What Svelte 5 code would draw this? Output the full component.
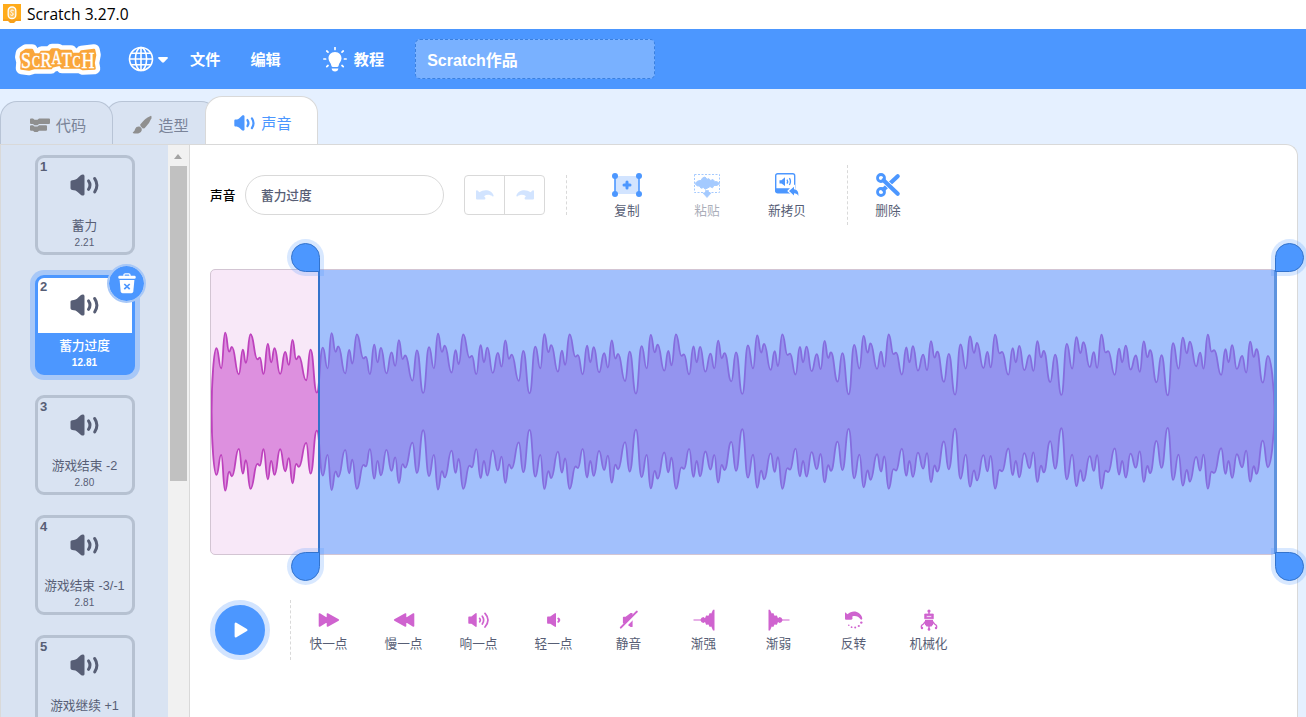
<script>
  let activeTab = $state('sounds')
  let selected = $state(1)
  let soundName = $state('蓄力过度')

  const tabs = [
    { id: 'code', label: '代码' },
    { id: 'costumes', label: '造型' },
    { id: 'sounds', label: '声音' }
  ]

  const sounds = [
    { name: '蓄力', length: '2.21' },
    { name: '蓄力过度', length: '12.81' },
    { name: '游戏结束 -2', length: '2.80' },
    { name: '游戏结束 -3/-1', length: '2.81' },
    { name: '游戏继续 +1', length: '' }
  ]

  const effects = [
    { id: 'faster', label: '快一点' },
    { id: 'slower', label: '慢一点' },
    { id: 'louder', label: '响一点' },
    { id: 'softer', label: '轻一点' },
    { id: 'mute', label: '静音' },
    { id: 'fadein', label: '渐强' },
    { id: 'fadeout', label: '渐弱' },
    { id: 'reverse', label: '反转' },
    { id: 'robot', label: '机械化' }
  ]

  // turning points of one loop, [offset, level], at the start and at the end of the sound
  const head = [[18,190],[32,130],[44,237],[56,180],[64,194],[85,112],[97,186],[106,146],[120,232],[141,157],[148,162],[159,113],[172,203],[182,148],[192,190],[209,113],[224,179],[235,140],[246,215],[257,157],[265,166],[287,94],[300,186],[319,57]]
  const tail = [[16,205],[32,129],[45,222],[57,175],[66,210],[85,136],[97,177],[107,129],[120,231],[131,180],[139,184],[160,110],[173,187],[182,148],[193,199],[207,128],[223,167],[235,117],[247,210],[258,164],[266,187],[285,87],[300,167],[319,48]]
  const loops = 10
  const mid = 141.6

  function buildWave() {
    let pts = []
    for (let i = 0; i < loops; i++) {
      const t = i / (loops - 1)
      head.forEach(([x, v], k) => {
        const px = -0.5 + i * 106.37 + (x + (tail[k][0] - x) * t) / 3
        pts.push([px, (v + (tail[k][1] - v) * t) / 3])
      })
    }
    pts.pop()
    const end = 1063.4
    const side = (list, sign) => {
      let d = ''
      for (let i = 1; i < list.length; i++) {
        const [x0, v0] = list[i - 1]
        const [x1, v1] = list[i]
        const c = (x1 - x0) * 0.5
        d += `C${(x0 + c).toFixed(2)} ${(mid - sign * v0).toFixed(2)} ${(x1 - c).toFixed(2)} ${(mid - sign * v1).toFixed(2)} ${x1.toFixed(2)} ${(mid - sign * v1).toFixed(2)}`
      }
      return d
    }
    const [fx, fv] = pts[0]
    const [lx, lv] = pts[pts.length - 1]
    return `M.6 ${mid}C.6 ${mid - 30} 3 ${mid - fv} ${fx} ${mid - fv}` + side(pts, 1) +
      `C${lx + 3} ${mid - lv} ${end} ${mid - 25} ${end} ${mid}C${end} ${mid + 25} ${lx + 3} ${mid + lv} ${lx} ${mid + lv}` +
      side([...pts].reverse(), -1) + `C3 ${mid + fv} .6 ${mid + 30} .6 ${mid}Z`
  }

  const wave = buildWave()
  const logoShape = 'M7.5 11L12 8H18L20 12.5H26L27.5 10H36L38 7.5H44L46.5 9H57L58 12L66 12L67.5 9.5L80 8L81 13L79.5 21L80.5 26.5L69 27L66 25.5H48L46 22.5L38 24.5L37 26H20L15 27.5L7.5 26.5L8 20L6.8 15Z'
</script>

{#snippet speaker()}
  <svg class="speaker" viewBox="0 0 28 22" fill="currentColor">
    <path d="M1.8 6.3 C4 6.3 6 5.5 8 3.3 L10.5 1 C12 -.1 14 .4 14 2 V20 C14 21.6 12 22 10.5 21 L8 18.7 C6 16.6 4 15.9 1.8 15.9 C.6 15.9 0 15.2 0 14.1 V8.1 C0 7 .6 6.3 1.8 6.3Z" />
    <path d="M18 6.9 Q21 11.1 18 15.3" fill="none" stroke="currentColor" stroke-width="3" stroke-linecap="round" />
    <path d="M24.2 4.6 Q28.6 11.1 24.2 18" fill="none" stroke="currentColor" stroke-width="3" stroke-linecap="round" />
  </svg>
{/snippet}

<div class="app">
  <div class="titlebar">
    <svg width="18" height="19" viewBox="0 0 18 19">
      <path d="M0 0H18V17L13 17L11 19H7L5 17H0Z" fill="#f7a01b" />
      <path d="M0 0H18V15H0Z" fill="#ffab1a" />
      <rect x="5.2" y="3" width="7.6" height="11.5" rx="3.6" fill="#ffc35c" stroke="#fff" stroke-width="1.3" />
      <path d="M10.6 6.5Q8 5 7.7 7.2Q8 8.3 9.4 8.9Q10.6 9.8 10 11Q8.7 12 7.4 10.7" fill="none" stroke="#fff" />
    </svg>
    <span>Scratch 3.27.0</span>
  </div>

  <header class="menubar">
    <svg class="logo" width="88" height="34" viewBox="0 0 88 34" stroke-linejoin="round">
      <path d={logoShape} fill="#fff" stroke="#fff" stroke-width="11.5" />
      <path d={logoShape} fill="#faa63a" stroke="#faa63a" stroke-width="2.6" />
      <text x="7" y="26" font-size="24" textLength="10" lengthAdjust="spacingAndGlyphs">S</text>
      <text x="18" y="24.5" font-size="17" textLength="8" lengthAdjust="spacingAndGlyphs">C</text>
      <text x="26.5" y="25" font-size="21" textLength="11" lengthAdjust="spacingAndGlyphs">R</text>
      <text x="37.5" y="21.5" font-size="19" textLength="10" lengthAdjust="spacingAndGlyphs">A</text>
      <text x="47.7" y="24.5" font-size="22" textLength="10" lengthAdjust="spacingAndGlyphs">T</text>
      <text x="58.5" y="24.5" font-size="17" textLength="8" lengthAdjust="spacingAndGlyphs">C</text>
      <text x="67.5" y="26" font-size="24" textLength="13" lengthAdjust="spacingAndGlyphs">H</text>
    </svg>
    <button class="lang" aria-label="语言">
      <svg width="26" height="26" viewBox="0 0 26 26" fill="none" stroke="#fff" stroke-width="1.6">
        <circle cx="13" cy="13" r="11.5" />
        <ellipse cx="13" cy="13" rx="5.6" ry="11.5" />
        <path d="M13 1.5V24.5M1.5 13H24.5M3.2 7.2H22.8M3.2 18.8H22.8" />
      </svg>
      <svg class="caret" width="10" height="6" viewBox="0 0 10 6"><path d="M1 0H9Q10.4.3 9.6 1.4L6 5.3Q5 6.2 4 5.3L.4 1.4Q-.4.3 1 0Z" fill="#fff" /></svg>
    </button>
    <button class="menu file">文件</button>
    <button class="menu edit">编辑</button>
    <button class="menu tutorials">
      <svg width="24" height="25" viewBox="0 0 24 25">
        <path d="M12 5C7.8 5 5.4 8 5.5 11.5C5.6 14.5 8 16 8.4 18.7Q8.6 20 10 20H14Q15.4 20 15.6 18.7C16 16 18.4 14.5 18.5 11.5C18.6 8 16.2 5 12 5Z" fill="#fff" />
        <path d="M8.6 21.4H15.4Q15 24.4 12 24.4T8.6 21.4Z" fill="#fff" />
        <path d="M12 .6V2.4M3.8 4L5 5.1M20.2 4L19 5.1M.8 12H2.6M21.4 12H23.2M3.8 19.6L5 18.5M20.2 19.6L19 18.5" stroke="#fff" stroke-width="1.7" stroke-linecap="round" />
      </svg>
      <span>教程</span>
    </button>
    <div class="project-title">Scratch作品</div>
  </header>

  <main>
    <nav class="tabs">
      {#each tabs as tab}
        <button class="tab {tab.id}" class:active={activeTab === tab.id} onclick={() => activeTab = tab.id}>
          {#if tab.id === 'code'}
            <svg width="20" height="14" viewBox="0 0 20 14" fill="#8f8f8f">
              <path d="M1 .5H3L4.5 1.8H7.5L9 .5H19Q20 .5 20 1.5V5Q20 6 19 6H9L7.5 7.3H4.5L3 6H1Q0 6 0 5V1.5Q0 .5 1 .5Z" />
              <path d="M1 7.3H3L4.5 8.6H7.5L9 7.3H16Q17 7.3 17 8.3V11.8Q17 12.8 16 12.8H9L7.5 14H4.5L3 12.8H1Q0 12.8 0 11.8V8.3Q0 7.3 1 7.3Z" />
            </svg>
          {:else if tab.id === 'costumes'}
            <svg width="20" height="20" viewBox="0 0 20 20" fill="#8f8f8f">
              <path d="M19 .7Q20 1.2 19.4 3.3Q17.6 8.6 12.6 13.2L10.8 13.4L8.3 10.9L8.5 9.3Q13 3 19 .7Z" />
              <path d="M7.4 11.6Q10.2 12.8 9.7 15.4Q8 19.6 1.2 18.2Q.2 17.6 1.3 17Q2.8 16.2 3.1 14Q4.3 11.2 7.4 11.6Z" />
            </svg>
          {:else}
            {@render speaker()}
          {/if}
          <span>{tab.label}</span>
        </button>
      {/each}
    </nav>

    <div class="editor">
      <aside class="list">
        {#each sounds as sound, i}
          <div class="item" class:selected={selected === i}>
            <span class="number">{i + 1}</span>
            <button class="thumb" aria-label={sound.name} onclick={() => selected = i}>{@render speaker()}</button>
            <div class="info">
              <div class="name">{sound.name}</div>
              <div class="length">{sound.length}</div>
            </div>
            {#if selected === i}
              <button class="trash" aria-label="删除">
                <svg width="18" height="21" viewBox="0 0 18 21">
                  <path d="M6 3V2Q6 .8 7.2 .8H10.8Q12 .8 12 2V3" fill="none" stroke="#fff" stroke-width="1.3" />
                  <rect x=".3" y="2.8" width="17.4" height="3" rx="1.2" fill="#fff" />
                  <path d="M1.6 7H16.4L15.3 18.5Q15 20.2 13.4 20.2H4.6Q3 20.2 2.7 18.5Z" fill="#fff" />
                  <path d="M6.3 11L11.7 16.2M11.7 11L6.3 16.2" stroke="#4c97ff" stroke-width="1.7" />
                </svg>
              </button>
            {/if}
          </div>
        {/each}
      </aside>
      <div class="scrollbar">
        <div class="arrow"></div>
        <div class="grip"></div>
      </div>

      <section class="panel">
        <div class="toolbar">
          <span class="label">声音</span>
          <input bind:value={soundName} aria-label="声音" />
          <div class="history">
            <button aria-label="撤销">
              <svg width="18" height="10" viewBox="0 0 18 10"><path d="M0 1.2Q.2-.2 1.6.6L3.4 2.3C8-1.2 15.8-.2 17.6 5.5Q17.8 6.8 16.6 6.4C13.6 4.3 10.5 4.4 8.1 6.2L9.3 7.8Q9.7 9.3 8.4 9.5H1Q0 9.4 0 8.5Z" fill="#d2e4ff" /></svg>
            </button>
            <button aria-label="重做">
              <svg class="flip" width="18" height="10" viewBox="0 0 18 10"><path d="M0 1.2Q.2-.2 1.6.6L3.4 2.3C8-1.2 15.8-.2 17.6 5.5Q17.8 6.8 16.6 6.4C13.6 4.3 10.5 4.4 8.1 6.2L9.3 7.8Q9.7 9.3 8.4 9.5H1Q0 9.4 0 8.5Z" fill="#d2e4ff" /></svg>
            </button>
          </div>
          <div class="rule short"></div>
          <div class="tools">
            <button class="tool">
              <svg width="30" height="26" viewBox="0 0 30 26">
                <rect x="3" y="4" width="24" height="18" fill="#d2e4ff" />
                <path d="M3 4V22M27 4V22" stroke="#4c97ff" stroke-width="1.6" />
                <g fill="#4c97ff"><circle cx="3" cy="4" r="3" /><circle cx="27" cy="4" r="3" /><circle cx="3" cy="22" r="3" /><circle cx="27" cy="22" r="3" /></g>
                <path d="M15 10V16M12 13H18" stroke="#4c97ff" stroke-width="3" stroke-linecap="round" />
              </svg>
              复制
            </button>
            <button class="tool disabled">
              <svg width="28" height="26" viewBox="0 0 28 26">
                <path d="M1.5 2.5H26.5V20.5H1.5Z" fill="none" stroke="#4c97ff" stroke-dasharray="2 1.5" />
                <path d="M2 11.5L4 9.5L6 8.7L8 8.5L9.5 6L12 5L14 7.3L16 6.7L17.5 8.5L20 7.5L22 9.7L24 9.7L26.5 11.5L24 13.4L21 13.4L19.5 15.8L17 14.5L15 15.8L12 17.2L10.5 15.5L8 16.2L6.5 14L4 13.8Z" fill="#4c97ff" stroke="#4c97ff" stroke-linejoin="round" />
                <path d="M12.5 18.5H15.5V21H18L14 25.5L10 21H12.5Z" fill="#4c97ff" stroke="#4c97ff" stroke-linejoin="round" stroke-width=".7" />
              </svg>
              粘贴
            </button>
            <button class="tool">
              <svg width="26" height="26" viewBox="0 0 26 26">
                <rect x="1.7" y="1.7" width="19" height="19.2" rx="2" fill="#fff" stroke="#4c97ff" stroke-width="1.4" />
                <path d="M1.7 16.2H16L14 18.5L17 21H3.5Q1.7 21 1.7 19Z" fill="#4c97ff" />
                <path d="M5.5 8.2H7.5L11 5.2V14L7.5 11.5H5.5Z" fill="#4c97ff" />
                <path d="M13 7.7Q14.3 9.6 13 11.6M15.4 6.2Q17.5 9.6 15.4 13" stroke="#4c97ff" stroke-width="1.3" fill="none" />
                <path d="M20 14.8V17.2Q25 17.6 24.4 24Q23.2 21.2 20 21.2V23.5L15 19Z" fill="#4c97ff" stroke="#fff" stroke-width="2.4" paint-order="stroke" />
              </svg>
              新拷贝
            </button>
          </div>
          <div class="rule tall"></div>
          <button class="tool">
            <svg width="26" height="26" viewBox="0 0 26 26" fill="none" stroke="#4c97ff">
              <circle cx="6" cy="6" r="3.5" stroke-width="2.8" />
              <circle cx="6" cy="20" r="3.5" stroke-width="2.8" />
              <path d="M8.5 17.5L22.7 4.2" stroke-width="4.2" stroke-linecap="round" />
              <path d="M10.5 10L22.7 21.8" stroke="#fff" stroke-width="5.8" />
              <path d="M8.5 8.3L22.7 21.8" stroke-width="4.2" stroke-linecap="round" />
            </svg>
            删除
          </button>
        </div>

        <div class="waveform">
          <svg class="wave" width="1065" height="284" viewBox="0 0 1065 284">
            <path d={wave} fill="#dd90df" stroke="#bd42bd" stroke-width="1.8" stroke-linejoin="round" />
          </svg>
          <div class="selection">
            <i class="handle top left"></i>
            <i class="handle bottom left"></i>
            <i class="handle top right"></i>
            <i class="handle bottom right"></i>
          </div>
        </div>

        <div class="effects">
          <button class="play" aria-label="播放">
            <svg width="14" height="16" viewBox="0 0 14 16"><path d="M1.8 1.8V14.2L12.3 8Z" fill="#fff" stroke="#fff" stroke-width="2.4" stroke-linejoin="round" /></svg>
          </button>
          <div class="rule"></div>
          {#each effects as effect}
            <button class="effect">
              <svg width="22" height="22" viewBox="0 0 22 22" fill="#cf63cf" stroke="#cf63cf" stroke-width="0">
                {#if effect.id === 'faster' || effect.id === 'slower'}
                  <path class:flip={effect.id === 'slower'} d="M1.5 5V17L9.5 12V17L20.3 11L9.5 5V10Z" stroke-width="1.6" stroke-linejoin="round" />
                {:else if effect.id === 'louder'}
                  <path d="M1 8.3H3.5L8 4.8V17.2L3.5 14H1Z" stroke-width="1.4" stroke-linejoin="round" />
                  <path d="M11.7 9.5Q13 11 11.7 12.8M14.3 7.2Q17 11 14.3 15M17 4.4Q23 11 17 18" fill="none" stroke-width="1.7" stroke-linecap="round" />
                {:else if effect.id === 'softer'}
                  <path d="M4.8 8.3H7.3L12.3 4.8V17.2L7.3 14H4.8Z" stroke-width="1.4" stroke-linejoin="round" />
                  <path d="M15.3 9.5Q17.3 11 15.3 12.8" stroke-width="2" stroke-linecap="round" />
                {:else if effect.id === 'mute'}
                  <path d="M5.5 8.3H8L13 4.6H14V17.4H13L8 14H5.5Z" stroke-width="1.2" stroke-linejoin="round" />
                  <path d="M4 20L20 4" stroke="#fff" stroke-width="3" />
                  <path d="M2.8 18.6L18.8 2.6" stroke-width="2" stroke-linecap="round" />
                {:else if effect.id === 'fadein' || effect.id === 'fadeout'}
                  <path class:flip={effect.id === 'fadeout'} d="M.5 10.5H7.5L8.6 8.7L10.5 8L12 9.2L13.1 6.4L15.5 6.7L16.7 4L18.3 4.6L20 .8H21.5V21.5H20L18.3 17.5L16.7 18L15.5 15.5L13.1 15.8L12 13L10.5 14L8.6 13.3L7.5 11.5H.5Z" />
                {:else if effect.id === 'reverse'}
                  <path d="M2 3.2L4.6 5.2C9.5 .5 17.5 2.2 19.3 9.2Q19.3 11 17.8 10.6C15.5 7.3 12.7 6.6 9.3 7.4L9.5 9.8Q9 10.7 8 10.7H3Q2 10.7 2 9.7Z" />
                  <g><circle cx="18.3" cy="13.6" r="1.2" /><circle cx="15.8" cy="17" r="1.1" /><circle cx="12.2" cy="18.5" r="1" /><circle cx="8.6" cy="18.2" r=".9" /><circle cx="5.8" cy="16.3" r=".8" /></g>
                {:else}
                  <circle cx="11" cy="2" r="1.6" />
                  <path d="M11 3V6M4 19.5Q2 16.8 5.5 15L7.5 12.5M18 19.5Q20 16.8 16.5 15L14.5 12.5M11 17V20.7" fill="none" stroke-width="1.4" />
                  <path d="M6.7 5H15.3V9.8H6.7ZM8.3 6.7V8.3H13.7V6.7Z" fill-rule="evenodd" stroke-width=".8" stroke-linejoin="round" />
                  <path d="M7 11H15V15.5L13.5 17.5H8.5L7 15.5Z" />
                  <circle cx="4" cy="19" r="1.2" /><circle cx="18" cy="19" r="1.2" /><circle cx="11" cy="20.4" r="1.3" />
                {/if}
              </svg>
              {effect.label}
            </button>
          {/each}
        </div>
      </section>
    </div>
  </main>
</div>

<style>
:global(body) {
  margin: 0;
  overflow: hidden;
}

* {
  box-sizing: border-box;
}

.app {
  width: 1306px;
  height: 717px;
  overflow: hidden;
  display: flex;
  flex-direction: column;
  background: #e5f0ff;
  color: #575e75;
  font-family: "Liberation Sans", "Noto Sans CJK SC", sans-serif;
  font-size: 12.7px;
}

svg {
  display: block;
  flex: none;
}

.flip {
  transform: scaleX(-1);
  transform-origin: center;
}

button {
  padding: 0;
  border: 0;
  background: none;
  color: inherit;
  font: inherit;
  cursor: pointer;
}

.titlebar {
  flex: none;
  height: 29px;
  display: flex;
  align-items: center;
  gap: 6px;
  padding: 0 0 2px 3px;
  background: #fff;
  color: #000;
  font-family: "Open Sans", sans-serif;
  font-size: 15.6px;
}

.menubar {
  flex: none;
  height: 60px;
  display: flex;
  align-items: center;
  padding-left: 14px;
  background: #4c97ff;
  color: #fff;
  font-weight: 700;
  font-size: 15.2px;
}

.logo text {
  font-family: "Liberation Serif", serif;
  font-weight: 400;
  fill: #fff;
  stroke: #fff;
  stroke-width: 0.5px;
}

.lang {
  display: flex;
  align-items: center;
  gap: 4px;
  margin-left: 26px;
}

.caret {
  margin-top: 2px;
}

.menu {
  padding-bottom: 2px;
}

.file {
  margin-left: 22px;
}

.edit {
  margin-left: 30px;
}

.tutorials {
  display: flex;
  align-items: center;
  gap: 7px;
  margin-left: 42px;
  padding-bottom: 0;
}

.tutorials span {
  margin-top: -2px;
}

.project-title {
  width: 240px;
  height: 40px;
  margin-left: 31px;
  padding-left: 11px;
  line-height: 41px;
  border: 1px dashed #3a80e0;
  border-radius: 5px;
  background: #79b1ff;
  font-size: 16px;
}

main {
  flex: 1;
  min-height: 0;
  display: flex;
  flex-direction: column;
}

.tabs {
  flex: none;
  height: 55px;
  display: flex;
  align-items: flex-end;
}

.tab {
  height: 43px;
  display: flex;
  align-items: center;
  justify-content: center;
  gap: 6px;
  padding-top: 4px;
  border: 1px solid #b8c4d6;
  border-bottom: 0;
  border-radius: 17px 17px 0 0;
  background: #d9e3f2;
  color: #7a8398;
  font-size: 15.2px;
}

.tab span {
  margin-top: -2px;
}

.tab.code {
  width: 113px;
  padding-left: 3px;
  z-index: 1;
}

.tab.costumes {
  width: 113px;
  margin-left: -8px;
  padding-right: 2px;
}

.tab.active {
  width: 113px;
  height: 48px;
  margin-left: -13px;
  padding-left: 3px;
  background: #fff;
  border-color: #d9d9d9;
  color: #4c97ff;
  z-index: 2;
}

.tab .speaker {
  width: 21px;
  height: 16px;
}

.editor {
  flex: 1;
  min-height: 0;
  width: 1298px;
  display: flex;
  border: 1px solid #d9d9d9;
  border-bottom: 0;
  border-radius: 0 12px 0 0;
  background: #fff;
}

.list {
  width: 167px;
  height: 572px;
  display: flex;
  flex-direction: column;
  gap: 20px;
  padding: 10px 0 0 34px;
  overflow: hidden;
  background: #d9e3f2;
}

.item {
  flex: none;
  position: relative;
  width: 100px;
  height: 100px;
  display: flex;
  flex-direction: column;
  border: 3px solid #b6c1d1;
  border-radius: 9px;
}

.item.selected {
  border-color: #4c97ff;
  background: #fff;
  box-shadow: 0 0 0 5px #a8c8f7;
}

.number {
  position: absolute;
  top: 1px;
  left: 2px;
  font-size: 13px;
  font-weight: 700;
}

.thumb {
  height: 55px;
  display: flex;
  justify-content: center;
  align-items: center;
  padding: 0 1px 1px 0;
}

.item .speaker {
  width: 29px;
  height: 22px;
}

.info {
  flex: 1;
  padding: 4px 1px 0 0;
  text-align: center;
  white-space: nowrap;
}

.selected .info {
  background: #4c97ff;
  color: #fff;
}

.name {
  height: 18px;
  line-height: 18px;
}

.selected .name {
  font-weight: 500;
}

.length {
  height: 15px;
  line-height: 15px;
  font-size: 10px;
  letter-spacing: 0.1px;
}

.selected .length {
  font-weight: 700;
}

.trash {
  position: absolute;
  top: -14px;
  right: -14px;
  width: 39px;
  height: 39px;
  display: flex;
  align-items: center;
  justify-content: center;
  border: 2px solid #a8c8f7;
  border-radius: 50%;
  background: #4c97ff;
  background-clip: padding-box;
}

.scrollbar {
  width: 22px;
  display: flex;
  flex-direction: column;
  align-items: center;
  padding-right: 1px;
  background: #f1f1f1;
  border-right: 1px solid #d9d9d9;
}

.arrow {
  margin: 9px 0 7px;
  border: 4.5px solid transparent;
  border-top: 0;
  border-bottom: 5px solid #a3a3a3;
}

.grip {
  width: 17px;
  height: 315px;
  background: #c1c1c1;
}

.panel {
  flex: 1;
  padding: 20px 0 0 20px;
}

.toolbar {
  height: 60px;
  display: flex;
  align-items: center;
}

.label {
  width: 35px;
  padding-bottom: 2px;
  color: #000;
  font-weight: 500;
}

input {
  width: 199px;
  height: 40px;
  padding: 0 15px 2px;
  border: 1px solid #d9d9d9;
  border-radius: 20px;
  outline: none;
  color: #575e75;
  font: inherit;
  font-weight: 500;
}

.history {
  display: flex;
  width: 81px;
  height: 40px;
  margin-left: 20px;
  border: 1px solid #d9d9d9;
  border-radius: 4px;
}

.history button {
  flex: 1;
  display: flex;
  align-items: center;
  justify-content: center;
}

.history button + button {
  border-left: 1px solid #d9d9d9;
}

.rule {
  width: 0;
  height: 60px;
  border-left: 1px dashed #d9d9d9;
}

.rule.short {
  height: 40px;
  margin-left: 21px;
}

.rule.tall {
  margin-left: 20px;
}

.tools {
  display: flex;
  margin-left: 20px;
}

.tool {
  width: 80px;
  display: flex;
  flex-direction: column;
  align-items: center;
  gap: 3px;
  padding-top: 2px;
  line-height: 20px;
}

.tool.disabled {
  opacity: 0.5;
}

.waveform {
  position: relative;
  width: 1066px;
  height: 286px;
  margin-top: 44px;
  border: 1px solid #d3c5d3;
  border-radius: 5px;
  background: #f8e8f8;
}

.selection {
  position: absolute;
  top: 0;
  bottom: 0;
  left: 107px;
  right: -2px;
  background: rgba(76, 151, 255, 0.5);
  border-left: 2px solid #3373cc;
  border-right: 3px solid #5e93de;
}

.handle {
  position: absolute;
  width: 29px;
  height: 29px;
  border: 1px solid #3373cc;
  background: #4c97ff;
  box-shadow: 0 0 0 4px rgba(76, 151, 255, 0.22);
}

.handle.top {
  top: -27px;
}

.handle.bottom {
  bottom: -27px;
}

.handle.left {
  left: -29px;
}

.handle.right {
  right: -30px;
}

.top.left {
  border-radius: 50% 50% 0 50%;
}

.bottom.left {
  border-radius: 50% 0 50% 50%;
}

.top.right {
  border-radius: 50% 50% 50% 0;
}

.bottom.right {
  border-radius: 0 50% 50% 50%;
}

.effects {
  height: 60px;
  display: flex;
  align-items: center;
  margin-top: 45px;
}

.play {
  width: 60px;
  height: 60px;
  display: flex;
  align-items: center;
  justify-content: center;
  margin-right: 20px;
  padding-left: 2px;
  border: 5px solid #d2e4ff;
  border-radius: 50%;
  background: #4c97ff;
}

.effect {
  width: 75px;
  display: flex;
  flex-direction: column;
  align-items: center;
  gap: 3px;
  padding-top: 2px;
  line-height: 20px;
}
</style>
